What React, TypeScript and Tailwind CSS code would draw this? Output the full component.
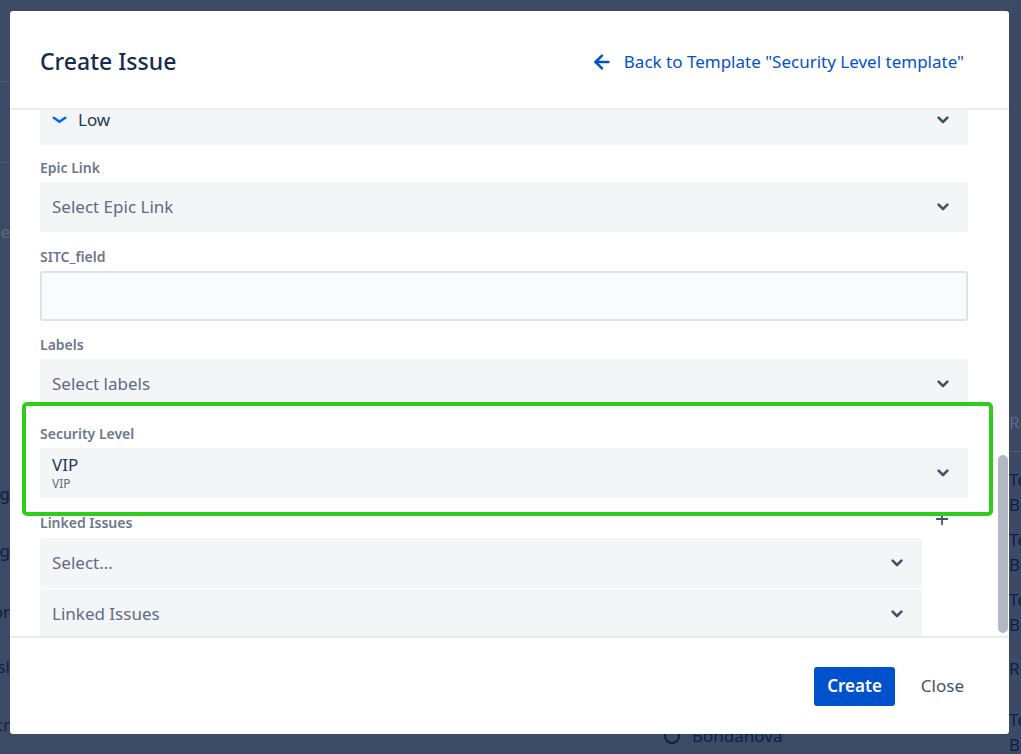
import { ArrowLeft, Plus } from "lucide-react";

const font = { fontFamily: '"Noto Sans", "Open Sans", sans-serif' };

function Chevron({ color = "#42526e", w = 12 }: { color?: string; w?: number }) {
  return (
    <svg width={w} height={(w * 8) / 12} viewBox="0 0 12 8" fill="none">
      <path d="M1.6 1.6 L6 6 L10.4 1.6" stroke={color} strokeWidth={2.6} strokeLinecap="round" strokeLinejoin="round" />
    </svg>
  );
}

function LowIcon() {
  return (
    <svg width={15} height={8} viewBox="0 0 15 8" fill="none">
      <path d="M1.8 1.8 L7.5 5.8 L13.2 1.8" stroke="#0065ff" strokeWidth={2.6} strokeLinecap="round" strokeLinejoin="round" />
    </svg>
  );
}

function SelectBox({ children }: { children: React.ReactNode }) {
  return (
    <div className="flex h-[50px] items-center justify-between rounded-[3px] bg-[#f4f5f7] pl-[12px] pr-[19px]">
      <div className="min-w-0">{children}</div>
      <Chevron />
    </div>
  );
}

function Label({ text }: { text: string }) {
  return <div className="mb-[6px] text-[14px] font-semibold leading-[16px] text-[#6b778c]">{text}</div>;
}

function Placeholder({ text }: { text: string }) {
  return <span className="text-[17px] text-[#5e6c84]">{text}</span>;
}

export default function App() {
  return (
    <div className="relative h-[754px] w-[1021px] overflow-hidden bg-[#3d4a66]" style={font}>
      {/* page behind the dialog */}
      <div className="flex h-full">
        <div className="w-[10px] overflow-hidden text-[17px] leading-[20px]">
          <div className="h-[82px] border-b border-[#4c5977]" />
          <div className="h-[81px] border-b border-[#4c5977]" />
          <div className="mt-[59px] flex justify-end whitespace-nowrap text-[#5b6782]">Due date</div>
          <div className="mt-[242px] flex justify-end whitespace-nowrap text-[#0d1f47]">Testing</div>
          <div className="mt-[37px] flex justify-end whitespace-nowrap text-[#0d1f47]">Testing</div>
          <div className="mt-[41px] flex justify-end whitespace-nowrap text-[#0d1f47]">Major</div>
          <div className="mt-[35px] flex justify-end whitespace-nowrap text-[#0d1f47]">Tasl</div>
          <div className="mt-[38px] flex justify-end whitespace-nowrap text-[#0d1f47]">Secr</div>
        </div>
        <div className="flex-1">
          <div className="mt-[726px] flex items-center gap-[12px] pl-[654px] text-[17px] leading-[20px] text-[#0d1f47]">
            <span className="h-[16px] w-[16px] rounded-full border-2 border-[#0d1f47]" />
            <span>Bondanova</span>
          </div>
        </div>
        <div className="w-[12px] overflow-hidden whitespace-nowrap text-[17px] text-[#0d1f47]">
          <div className="mt-[413px] h-[20px] leading-[20px] text-[#5b6782]">Reporter</div>
          <div className="mt-[18px] border-t border-[#4c5977]" />
          <div className="mt-[15px] leading-[25px]">Test<br />Bondanova</div>
          <div className="mt-[10px] leading-[25px]">Test<br />Bondanova</div>
          <div className="mt-[10px] leading-[25px]">Test<br />Bondanova</div>
          <div className="mt-[19px] leading-[25px]">Ruslan</div>
          <div className="mt-[26px] leading-[25px]">Test<br />Bondanova</div>
        </div>
      </div>

      {/* dialog */}
      <div className="absolute inset-0 pl-[10px] pt-[11px]">
        <div className="flex h-[723px] w-[999px] flex-col overflow-hidden rounded-[3px] bg-white">
          <div className="flex h-[99px] shrink-0 items-center justify-between border-b-2 border-[#ebecf0] pl-[30px] pr-[45px] pt-[4px]">
            <h1 className="text-[23px] font-medium text-[#172b4d]">Create Issue</h1>
            <a className="flex items-center gap-[11px] text-[17px] text-[#0052cc]">
              <ArrowLeft size={22} strokeWidth={2.7} />
              <span>Back to Template "Security Level template"</span>
            </a>
          </div>

          <div className="relative flex-1 overflow-hidden pl-[30px] pr-[41px]">
            <div className="-mt-[15px]">
              <SelectBox>
                <div className="flex items-center gap-[11px]">
                  <LowIcon />
                  <span className="text-[17px] text-[#253858]">Low</span>
                </div>
              </SelectBox>
            </div>

            <div className="mt-[15px]">
              <Label text="Epic Link" />
              <SelectBox>
                <Placeholder text="Select Epic Link" />
              </SelectBox>
            </div>

            <div className="mt-[17px]">
              <Label text="SITC_field" />
              <div className="h-[50px] rounded-[3px] border-2 border-[#dfe1e6] bg-[#fafbfc]" />
            </div>

            <div className="mt-[16px]">
              <Label text="Labels" />
              <SelectBox>
                <Placeholder text="Select labels" />
              </SelectBox>
            </div>

            <div className="relative mt-[17px]">
              <Label text="Security Level" />
              <SelectBox>
                <div className="pt-[1px]">
                  <div className="text-[17px] leading-[20px] text-[#253858]">VIP</div>
                  <div className="text-[12px] leading-[18px] text-[#5e6c84]">VIP</div>
                </div>
              </SelectBox>
              <div className="pointer-events-none absolute -bottom-[18px] -left-[18px] -right-[25px] -top-[24px] rounded-[5px] border-4 border-[#2fcc1b]" />
            </div>

            <div className="mt-[17px] flex">
              <div className="flex-1">
                <div className="mb-[7px] text-[14px] font-semibold leading-[16px] text-[#6b778c]">Linked Issues</div>
                <div className="flex h-[50px] items-center justify-between rounded-[3px] bg-[#f4f5f7] pl-[12px] pr-[19px]">
                  <Placeholder text="Select..." />
                  <Chevron />
                </div>
                <div className="mt-[1px] flex h-[50px] items-center justify-between rounded-[3px] bg-[#f4f5f7] pl-[12px] pr-[19px]">
                  <Placeholder text="Linked Issues" />
                  <Chevron />
                </div>
              </div>
              <div className="-mt-[5px] w-[46px] pl-[11px]">
                <Plus size={18} strokeWidth={2.4} className="text-[#42526e]" />
              </div>
            </div>

            <div className="absolute bottom-[3px] right-[1px] h-[178px] w-[10px] rounded-full bg-[#b3b9c4]" />
          </div>

          <div className="flex h-[98px] shrink-0 items-center justify-end gap-[13px] border-t-2 border-[#ebecf0] pr-[32px]">
            <button className="h-[39px] rounded-[3px] bg-[#0052cc] px-[13px] text-[17px] font-semibold text-white">Create</button>
            <button className="h-[39px] px-[13px] text-[17px] text-[#42526e]">Close</button>
          </div>
        </div>
      </div>
    </div>
  );
}
